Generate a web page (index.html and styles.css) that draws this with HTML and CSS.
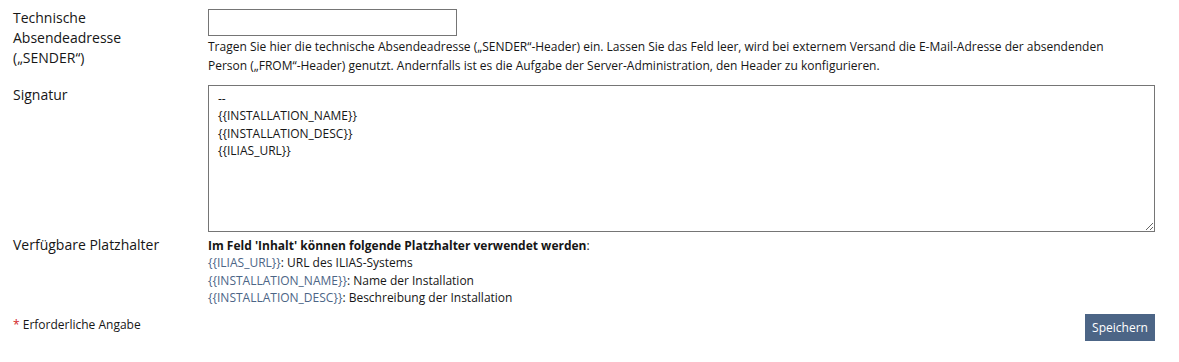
FILE: index.html
```html
<!DOCTYPE html>
<html lang="de">
<head>
    <meta charset="UTF-8">
    <title>Mail-Einstellungen</title>
    <link rel="stylesheet" href="styles.css">
</head>
<body>
    <form class="settings-form">
        <div class="form-row row-sender">
            <label class="form-label" for="sender">Technische Absendeadresse („SENDER“)</label>
            <div class="form-field">
                <input type="text" id="sender" class="text-input">
                <div class="help-text">Tragen Sie hier die technische Absendeadresse („SENDER“-Header) ein. Lassen Sie das Feld leer, wird bei externem Versand die E-Mail-Adresse der absendenden Person („FROM“-Header) genutzt. Andernfalls ist es die Aufgabe der Server-Administration, den Header zu konfigurieren.</div>
            </div>
        </div>

        <div class="form-row row-signature">
            <label class="form-label" for="signature">Signatur</label>
            <div class="form-field">
                <textarea id="signature" class="text-area">--
{{INSTALLATION_NAME}}
{{INSTALLATION_DESC}}
{{ILIAS_URL}}</textarea>
            </div>
        </div>

        <div class="form-row row-placeholders">
            <div class="form-label">Verfügbare Platzhalter</div>
            <div class="form-field placeholders">
                <div><strong>Im Feld 'Inhalt' können folgende Platzhalter verwendet werden</strong>:</div>
                <div><span class="ph">{{ILIAS_URL}}</span>: URL des ILIAS-Systems</div>
                <div><span class="ph">{{INSTALLATION_NAME}}</span>: Name der Installation</div>
                <div><span class="ph">{{INSTALLATION_DESC}}</span>: Beschreibung der Installation</div>
            </div>
        </div>

        <div class="form-footer">
            <span class="required-note"><span class="asterisk">*</span> Erforderliche Angabe</span>
            <button type="button" class="btn-save">Speichern</button>
        </div>
    </form>
</body>
</html>
```

FILE: styles.css
```css
* {
    margin: 0;
    padding: 0;
    box-sizing: border-box;
}

body {
    font-family: "Open Sans", "Liberation Sans", sans-serif;
    background: #ffffff;
    color: #161616;
    font-size: 14px;
    line-height: 20px;
}

.settings-form {
    padding: 8px 24px 0 13px;
}

.form-row {
    display: grid;
    grid-template-columns: 195px 1fr;
}

.form-label {
    font-size: 14px;
    line-height: 20px;
    color: #161616;
    padding-right: 20px;
}

.row-signature {
    margin-top: 10px;
}

.row-placeholders {
    margin-top: 3px;
}

.text-input {
    display: block;
    width: 249px;
    height: 27px;
    margin-top: 1px;
    border: 1px solid #757575;
    background: #fff;
    font-family: inherit;
    font-size: 12px;
    padding: 0 6px;
}

.help-text {
    max-width: 920px;
    font-size: 12px;
    line-height: 19px;
    margin-top: 1px;
    color: #161616;
}

.text-area {
    display: block;
    width: 100%;
    height: 147px;
    border: 1px solid #757575;
    font-family: inherit;
    font-size: 12px;
    line-height: 17.4px;
    color: #161616;
    padding: 4px 9px;
    resize: vertical;
}

.placeholders {
    font-size: 12px;
    line-height: 17.4px;
    padding-top: 2px;
}

.placeholders strong {
    font-weight: 700;
}

.ph {
    color: #4c6586;
}

.form-footer {
    display: flex;
    justify-content: space-between;
    align-items: flex-start;
    margin-top: 6px;
}

.required-note {
    font-size: 12px;
    line-height: 18px;
    margin-top: 3px;
}

.asterisk {
    color: #d21f1f;
}

.btn-save {
    background: #4c6586;
    color: #ffffff;
    border: none;
    font-family: inherit;
    font-size: 12px;
    width: 70px;
    height: 27px;
    margin-top: 1px;
}
```
